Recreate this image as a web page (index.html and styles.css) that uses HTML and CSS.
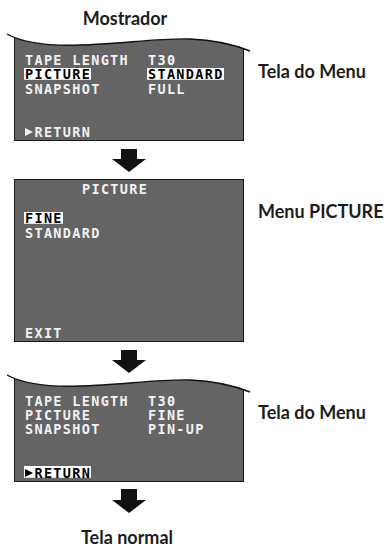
FILE: index.html
```html
<!DOCTYPE html>
<html>
<head>
	<meta charset="utf-8">
	<title>Menu PICTURE</title>
	<link rel="stylesheet" href="styles.css">
</head>
<body>

	<div class="flow">
		<p class="caption top">Mostrador</p>

		<!-- Tela do menu, antes -->
		<div class="step">
			<div class="screen">
				<svg class="wave" width="245" height="19" viewBox="0 0 245 19">
					<defs>
						<clipPath id="wave1">
							<path d="M0,1 C18,11 43,13 73,12 C113,11 153,5 183,6 C208,7 228,12 243,18 L243,19 L0,19 Z"/>
						</clipPath>
					</defs>
					<g clip-path="url(#wave1)">
						<rect x="7" y="0" width="230" height="19" fill="#646464"/>
						<rect x="7" y="0" width="1" height="19" fill="#1a1a1a"/>
						<rect x="236" y="0" width="1" height="19" fill="#1a1a1a"/>
					</g>
					<path d="M0,1 C18,11 43,13 73,12 C113,11 153,5 183,6 C208,7 228,12 243,18" fill="none" stroke="#111" stroke-width="1.4"/>
				</svg>
				<div class="panel open">
					<div class="row"><span>TAPE LENGTH</span><span>T30</span></div>
					<div class="row"><span><b class="sel">PICTURE</b></span><span><b class="sel">STANDARD</b></span></div>
					<div class="row"><span>SNAPSHOT</span><span>FULL</span></div>
					<div class="row foot"><span><i class="play"></i>RETURN</span></div>
				</div>
			</div>
			<p class="label">Tela do Menu</p>
		</div>

		<svg class="arrow" width="34" height="23" viewBox="0 0 34 23">
			<rect x="9" y="0" width="16" height="11" fill="#111"/>
			<polygon points="0,10 34,10 17,23" fill="#111"/>
		</svg>

		<!-- Menu PICTURE -->
		<div class="step">
			<div class="screen">
				<div class="panel closed">
					<div class="row title">PICTURE</div>
					<div class="row skip"><span><b class="sel">FINE</b></span></div>
					<div class="row"><span>STANDARD</span></div>
					<div class="row exit"><span>EXIT</span></div>
				</div>
			</div>
			<p class="label second">Menu PICTURE</p>
		</div>

		<svg class="arrow tight" width="34" height="23" viewBox="0 0 34 23">
			<rect x="9" y="0" width="16" height="11" fill="#111"/>
			<polygon points="0,10 34,10 17,23" fill="#111"/>
		</svg>

		<!-- Tela do menu, depois -->
		<div class="step">
			<div class="screen">
				<svg class="wave" width="245" height="19" viewBox="0 0 245 19">
					<defs>
						<clipPath id="wave3">
							<path d="M0,1 C18,11 43,13 73,12 C113,11 153,5 183,6 C208,7 228,12 243,18 L243,19 L0,19 Z"/>
						</clipPath>
					</defs>
					<g clip-path="url(#wave3)">
						<rect x="7" y="0" width="230" height="19" fill="#646464"/>
						<rect x="7" y="0" width="1" height="19" fill="#1a1a1a"/>
						<rect x="236" y="0" width="1" height="19" fill="#1a1a1a"/>
					</g>
					<path d="M0,1 C18,11 43,13 73,12 C113,11 153,5 183,6 C208,7 228,12 243,18" fill="none" stroke="#111" stroke-width="1.4"/>
				</svg>
				<div class="panel open">
					<div class="row"><span>TAPE LENGTH</span><span>T30</span></div>
					<div class="row"><span>PICTURE</span><span>FINE</span></div>
					<div class="row"><span>SNAPSHOT</span><span>PIN-UP</span></div>
					<div class="row foot"><span><b class="sel"><i class="play"></i>RETURN</b></span></div>
				</div>
			</div>
			<p class="label">Tela do Menu</p>
		</div>

		<svg class="arrow last" width="34" height="24" viewBox="0 0 34 24">
			<rect x="9" y="0" width="16" height="12" fill="#111"/>
			<polygon points="0,11 34,11 17,24" fill="#111"/>
		</svg>

		<p class="caption bottom">Tela normal</p>
	</div>

</body>
</html>
```

FILE: styles.css
```css
html, body {
	margin: 0;
	padding: 0;
	overflow: hidden;
	background: #fff;
}

body {
	width: 386px;
	height: 544px;
	font-family: Lato, "Open Sans", sans-serif;
	color: #1c1c1c;
}

.flow {
	display: flex;
	flex-direction: column;
}

/* titulos */
.caption {
	margin: 0;
	font-weight: 700;
	font-size: 18px;
	line-height: 20px;
	text-align: center;
}
.caption.top {
	width: 230px;
	margin: 8px 0 5px 10px;
}
.caption.bottom {
	width: 230px;
	margin: 14px 0 0 12px;
}

.step {
	display: flex;
	align-items: flex-start;
}

.label {
	margin: 28px 0 0 14px;
	font-weight: 700;
	font-size: 18px;
	line-height: 20px;
	white-space: nowrap;
}
.label.second {
	margin-top: 22px;
}

/* tela do visor */
.screen {
	width: 230px;
	margin-left: 14px;
	flex: none;
}

.wave {
	display: block;
	margin-left: -7px;
}

.panel {
	background: #646464;
	border: 1px solid #1a1a1a;
	color: #f2f2f2;
	font-family: "DejaVu Sans Mono", monospace;
	font-weight: 700;
	font-size: 13.5px;
	line-height: 14.4px;
	letter-spacing: 1.33px;
	padding: 0 0 0 10px;
}
.panel.open {
	border-top: 0;
	padding: 1px 0 1px 10px;
}
.panel.closed {
	padding: 2px 0 0 10px;
}

.row {
	display: grid;
	grid-template-columns: 123px auto;
	height: 14.4px;
	white-space: nowrap;
}
.row.title {
	display: block;
	padding-left: 57px;
}
.row.skip {
	margin-top: 14.4px;
}
.row.foot {
	margin-top: 28.8px;
}
.row.exit {
	margin-top: 86.4px;
}

/* item selecionado: caixa branca */
.sel {
	font-weight: 700;
	color: #000;
	margin-left: -1px;
	padding-left: 1px;
	background: linear-gradient(#fff, #fff) 0 1.4px / 100% 11.8px no-repeat;
}

.play {
	display: inline-block;
	width: 9.46px;
	height: 9px;
	letter-spacing: 0;
	vertical-align: -0.5px;
}
.play::before {
	content: "";
	display: block;
	width: 0;
	height: 0;
	border-left: 8px solid currentColor;
	border-top: 4.5px solid transparent;
	border-bottom: 4.5px solid transparent;
}

.arrow {
	display: block;
	margin: 8px 0 7px 112px;
}
.arrow.tight {
	margin-bottom: 1px;
}
.arrow.last {
	margin: 7px 0 0 112px;
}
```
